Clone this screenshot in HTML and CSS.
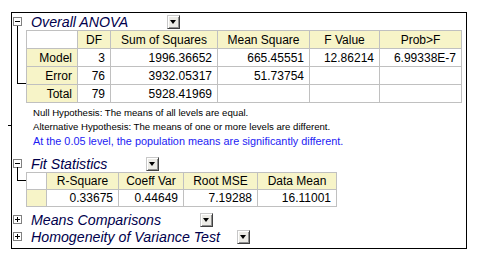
FILE: index.html
```html
<!DOCTYPE html>
<html lang="en">
<head>
    <meta charset="UTF-8">
    <title>One-Way ANOVA</title>
    <link rel="stylesheet" href="styles.css">
</head>
<body>
    <div class="panel">
        <div class="sec-head">
            <span class="toggle open"></span>
            <span class="sec-title">Overall ANOVA</span>
            <span class="dd"></span>
        </div>
        <div class="sec-body anova-body">
            <table class="grid anova">
                <colgroup>
                    <col style="width:51px"><col style="width:33px"><col style="width:107px">
                    <col style="width:92px"><col style="width:70px"><col style="width:82px">
                </colgroup>
                <tr>
                    <th class="corner"></th><th>DF</th><th>Sum of Squares</th>
                    <th>Mean Square</th><th>F Value</th><th>Prob&gt;F</th>
                </tr>
                <tr>
                    <th class="rowh">Model</th><td>3</td><td>1996.36652</td>
                    <td>665.45551</td><td>12.86214</td><td>6.99338E-7</td>
                </tr>
                <tr>
                    <th class="rowh">Error</th><td>76</td><td>3932.05317</td>
                    <td>51.73754</td><td></td><td></td>
                </tr>
                <tr>
                    <th class="rowh">Total</th><td>79</td><td>5928.41969</td>
                    <td></td><td></td><td></td>
                </tr>
            </table>
        </div>
        <div class="notes">
            <p class="note">Null Hypothesis: The means of all levels are equal.</p>
            <p class="note">Alternative Hypothesis: The means of one or more levels are different.</p>
            <p class="verdict">At the 0.05 level, the population means are significantly different.</p>
        </div>

        <div class="sec-head">
            <span class="toggle open"></span>
            <span class="sec-title">Fit Statistics</span>
            <span class="dd"></span>
        </div>
        <div class="sec-body fit-body">
            <table class="grid fit">
                <colgroup>
                    <col style="width:20px"><col style="width:72px"><col style="width:65px">
                    <col style="width:74px"><col style="width:79px">
                </colgroup>
                <tr>
                    <th class="corner"></th><th>R-Square</th><th>Coeff Var</th>
                    <th>Root MSE</th><th>Data Mean</th>
                </tr>
                <tr>
                    <th class="rowh"></th><td>0.33675</td><td>0.44649</td>
                    <td>7.19288</td><td>16.11001</td>
                </tr>
            </table>
        </div>

        <div class="sec-head collapsed-first">
            <span class="toggle"></span>
            <span class="sec-title">Means Comparisons</span>
            <span class="dd"></span>
        </div>
        <div class="sec-head">
            <span class="toggle"></span>
            <span class="sec-title">Homogeneity of Variance Test</span>
            <span class="dd tight"></span>
        </div>
    </div>
</body>
</html>
```

FILE: styles.css
```css
body {
    margin: 0;
    font-family: 'Liberation Sans', Arial, sans-serif;
    color: #000;
    background: #fff;
}
.panel {
    box-sizing: border-box;
    width: 456px;
    height: 237px;
    margin: 12px 0 0 11px;
    border: 1px solid #000;
}
.sec-head {
    display: flex;
    align-items: center;
    height: 17px;
}
.collapsed-first {
    margin-top: 4px;
}
.toggle {
    position: relative;
    box-sizing: border-box;
    width: 9px;
    height: 9px;
    margin-left: 1px;
    border: 1px solid #808080;
    background: #fff;
}
.toggle::before {
    content: '';
    position: absolute;
    left: 1px;
    top: 3px;
    width: 5px;
    height: 1px;
    background: #000;
}
.toggle::after {
    content: '';
    position: absolute;
    left: 3px;
    top: 1px;
    width: 1px;
    height: 5px;
    background: #000;
}
.toggle.open::after {
    display: none;
}
.sec-title {
    margin-left: 9px;
    font-size: 14.2px;
    font-style: italic;
    color: #00004c;
    white-space: nowrap;
}
.dd {
    position: relative;
    box-sizing: border-box;
    width: 13px;
    height: 14px;
    margin-left: 39px;
    background: #ecebe6;
    border: 1px solid;
    border-color: #c8c8c8 #404040 #404040 #c8c8c8;
    box-shadow: inset 1px 1px #fff, inset -1px -1px #909090;
}
.dd.tight {
    margin-left: 17px;
}
.dd::after {
    content: '';
    position: absolute;
    left: 2px;
    top: 4px;
    border-left: 3.5px solid transparent;
    border-right: 3.5px solid transparent;
    border-top: 4px solid #000;
}
.sec-body {
    position: relative;
    padding-left: 14px;
}
.sec-body::before {
    content: '';
    position: absolute;
    left: 5px;
    width: 8px;
    border-left: 1px solid #000;
    border-bottom: 1px solid #000;
}
.anova-body::before {
    top: -4px;
    height: 57px;
}
.fit-body::before {
    top: -5px;
    height: 13px;
}
.grid {
    border-collapse: collapse;
    table-layout: fixed;
    border: 1px solid #000;
    font-size: 12px;
}
.anova {
    width: 436px;
}
.fit {
    width: 311px;
}
.grid th,
.grid td {
    border: 1px solid #c0c0c0;
    padding: 0 5px 0 2px;
    white-space: nowrap;
    overflow: hidden;
    line-height: 14px;
}
.anova th,
.anova td {
    height: 17px;
}
.fit th,
.fit td {
    height: 16px;
}
.grid th {
    font-weight: normal;
    background: #f7f4c8;
    text-align: center;
    padding: 0 2px;
}
.grid th.rowh {
    text-align: right;
    padding-right: 5px;
}
.grid th.corner {
    background: #fff;
}
.grid td {
    text-align: right;
}
.notes {
    position: relative;
    padding-left: 21px;
    margin: 3px 0 7px;
}
/* stray tick left of the frame */
.notes::before {
    content: '';
    position: absolute;
    left: -4px;
    top: 19px;
    width: 3px;
    height: 1px;
    background: #000;
}
.notes p {
    margin: 0;
    line-height: 14px;
}
.note {
    font-size: 9.6px;
}
.verdict {
    font-size: 10.85px;
    color: #1c1cf4;
}
```
